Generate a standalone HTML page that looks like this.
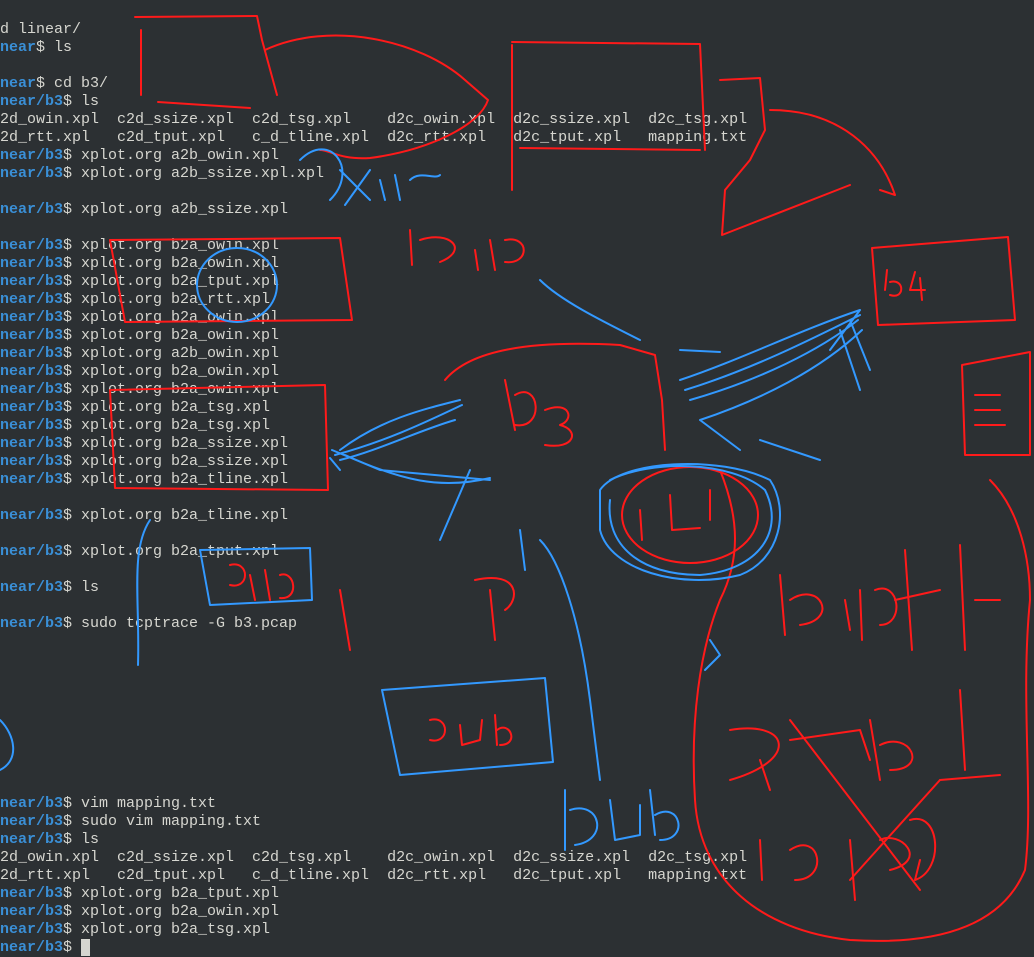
<!DOCTYPE html>
<html><head><meta charset="utf-8"><style>
html,body{margin:0;padding:0;background:#2c3033;width:1034px;height:945px;overflow:hidden}
pre{position:absolute;left:0;top:21px;margin:0;font-family:"Liberation Mono",monospace;font-size:15px;line-height:18px;color:#d6d6d0;white-space:pre}
b{color:#3a8fd6;font-weight:bold}
.cur{background:#d6d6d0;color:#d6d6d0}
svg{position:absolute;left:0;top:0}
</style></head><body>
<pre>d linear/
<b>near</b>$ ls

<b>near</b>$ cd b3/
<b>near/b3</b>$ ls
2d_owin.xpl  c2d_ssize.xpl  c2d_tsg.xpl    d2c_owin.xpl  d2c_ssize.xpl  d2c_tsg.xpl
2d_rtt.xpl   c2d_tput.xpl   c_d_tline.xpl  d2c_rtt.xpl   d2c_tput.xpl   mapping.txt
<b>near/b3</b>$ xplot.org a2b_owin.xpl
<b>near/b3</b>$ xplot.org a2b_ssize.xpl.xpl

<b>near/b3</b>$ xplot.org a2b_ssize.xpl

<b>near/b3</b>$ xplot.org b2a_owin.xpl
<b>near/b3</b>$ xplot.org b2a_owin.xpl
<b>near/b3</b>$ xplot.org b2a_tput.xpl
<b>near/b3</b>$ xplot.org b2a_rtt.xpl
<b>near/b3</b>$ xplot.org b2a_owin.xpl
<b>near/b3</b>$ xplot.org b2a_owin.xpl
<b>near/b3</b>$ xplot.org a2b_owin.xpl
<b>near/b3</b>$ xplot.org b2a_owin.xpl
<b>near/b3</b>$ xplot.org b2a_owin.xpl
<b>near/b3</b>$ xplot.org b2a_tsg.xpl
<b>near/b3</b>$ xplot.org b2a_tsg.xpl
<b>near/b3</b>$ xplot.org b2a_ssize.xpl
<b>near/b3</b>$ xplot.org b2a_ssize.xpl
<b>near/b3</b>$ xplot.org b2a_tline.xpl

<b>near/b3</b>$ xplot.org b2a_tline.xpl

<b>near/b3</b>$ xplot.org b2a_tput.xpl

<b>near/b3</b>$ ls

<b>near/b3</b>$ sudo tcptrace -G b3.pcap









<b>near/b3</b>$ vim mapping.txt
<b>near/b3</b>$ sudo vim mapping.txt
<b>near/b3</b>$ ls
2d_owin.xpl  c2d_ssize.xpl  c2d_tsg.xpl    d2c_owin.xpl  d2c_ssize.xpl  d2c_tsg.xpl
2d_rtt.xpl   c2d_tput.xpl   c_d_tline.xpl  d2c_rtt.xpl   d2c_tput.xpl   mapping.txt
<b>near/b3</b>$ xplot.org b2a_tput.xpl
<b>near/b3</b>$ xplot.org b2a_owin.xpl
<b>near/b3</b>$ xplot.org b2a_tsg.xpl
<b>near/b3</b>$ <span class="cur">_</span></pre>
<svg width="1034" height="945" fill="none" stroke-width="2" stroke-linecap="round" stroke-linejoin="round">
<g stroke="#ff1a1a">
<path d="M135 17 L257 16 L262 40 L277 95"/>
<path d="M141 30 L141 95"/>
<path d="M158 102 L250 108"/>
<path d="M265 50 C330 20 420 40 465 80 L488 100 C480 125 430 150 370 158 C340 160 330 150 320 150"/>
<path d="M512 42 L700 44 L705 150"/>
<path d="M512 45 L512 190"/>
<path d="M520 148 L700 150"/>
<path d="M720 80 L760 78 L765 130 L750 160 L725 190 L722 235 L850 185"/>
<path d="M770 110 C840 110 880 150 895 195 L880 190"/>
<path d="M872 248 L1008 237 L1015 320 L878 325 Z"/>
<path d="M885 290 L887 270 M890 282 C905 278 905 300 890 295 M915 272 L910 290 L925 290 M920 278 L922 300"/>
<path d="M962 365 L1030 352 L1030 455 L965 455 Z M975 395 L1000 395 M975 410 L1000 410 M975 425 L1005 425"/>
<path d="M445 380 C470 350 530 340 620 345 L655 355 L662 400 L665 450"/>
<path d="M110 240 L340 238 L352 320 L125 322 Z"/>
<path d="M110 390 L325 385 L328 490 L115 488 Z"/>
<path d="M505 380 L515 430 M515 395 C540 380 545 430 515 425 M545 410 C570 400 575 420 560 425 C580 430 575 450 545 445"/>
<ellipse cx="690" cy="515" rx="68" ry="48"/>
<path d="M640 510 L642 540 M670 495 L672 530 L700 528 M710 490 L710 520"/>
<path d="M410 230 L412 265 M420 240 C450 230 470 250 440 262 M475 250 L478 270 M490 240 L495 270 M505 240 C530 235 530 265 505 262"/>
<path d="M475 580 C520 570 520 600 505 610 M490 590 L495 640"/>
<path d="M720 470 C740 520 740 560 720 600 C700 650 690 720 695 800 C700 880 760 930 850 940 C930 945 1000 930 1025 870 C1034 800 1020 700 1030 600 C1030 560 1020 510 990 480"/>
<path d="M780 575 L785 635 M790 600 C820 580 840 620 800 625 M845 600 L850 630 M860 590 L862 640 M875 590 C900 580 905 625 880 625 M905 550 L912 650 M895 600 L940 590 M960 545 L965 650 M975 600 L1000 600"/>
<path d="M730 730 C790 720 800 760 730 780 M760 760 L770 790 M790 740 L860 730 L870 760 M870 720 L880 780 M880 745 C910 730 930 770 890 770 M960 690 L965 770 M940 780 L1000 775"/>
<path d="M790 720 L920 890 M940 780 L850 880"/>
<path d="M760 840 L762 880 M790 850 C820 830 830 880 795 880 M850 840 L855 900 M880 840 C900 830 930 860 890 870 M910 820 C940 810 945 870 915 880 L920 860"/>
<path d="M340 590 L350 650"/>
<path d="M230 565 C250 560 250 590 230 585 M250 575 L255 600 M265 570 L270 600 M280 575 C295 570 300 600 280 598"/>
<path d="M430 720 C450 715 450 745 430 740 M460 725 L462 745 L480 740 L482 720 M495 715 L497 745 M497 730 C510 720 520 745 500 745"/>
</g>
<g stroke="#3399ff">
<ellipse cx="237" cy="285" rx="40" ry="37"/>
<path d="M300 160 C330 130 360 170 330 200 M340 170 L370 200 M370 170 L345 205 M380 180 L385 200 M395 175 L400 200 M410 180 C420 170 435 180 440 175"/>
<path d="M340 450 C380 420 420 410 460 400 M335 455 C390 440 430 420 462 405 M340 460 C380 450 420 430 455 420 M332 450 L380 470 L490 480 M345 455 C400 480 440 490 490 478 M330 458 L340 470"/>
<path d="M680 380 C740 360 800 330 860 310 M685 390 C750 370 810 340 860 315 M690 400 C760 380 820 350 858 320 M700 420 C760 400 820 370 862 330 M700 420 L740 450 M760 440 L820 460 M840 330 L860 390 M850 320 L870 370 M830 350 L860 310 M680 350 L720 352"/>
<path d="M600 490 C620 460 720 455 770 480 C790 510 780 560 740 575 C680 590 610 570 600 530 Z"/>
<path d="M610 480 C650 460 730 460 765 490 C785 530 760 570 700 575 C640 575 605 545 610 500"/>
<path d="M200 550 L310 548 L312 600 L210 605 Z"/>
<path d="M382 690 L545 678 L553 762 L400 775 Z"/>
<path d="M540 540 C560 560 580 620 590 700 L600 780"/>
<path d="M470 470 L440 540 M520 530 L525 570"/>
<path d="M150 520 C130 550 140 600 138 665"/>
<path d="M565 790 L565 850 M570 810 C600 800 610 840 575 845 M610 800 L615 840 L640 835 L640 805 M650 790 L655 835 M655 815 C680 800 690 840 660 840"/>
<path d="M0 720 C15 735 20 760 0 770"/>
<path d="M540 280 C560 300 600 320 640 340"/>
<path d="M710 640 L720 655 L705 670"/>
</g>
</svg>
</body></html>
